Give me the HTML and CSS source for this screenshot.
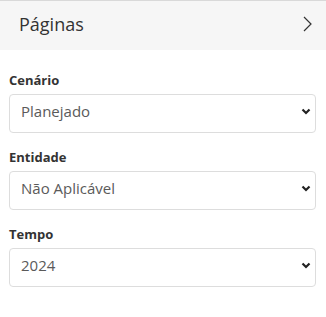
FILE: index.html
```html
<!DOCTYPE html>
<html lang="pt-BR">
<head>
    <meta charset="UTF-8">
    <meta name="viewport" content="width=device-width, initial-scale=1.0">
    <title>Filtros</title>
    <link rel="stylesheet" href="styles.css">
</head>
<body>
    <div class="panel-header">
        <span class="panel-title">Páginas</span>
        <svg class="panel-arrow" width="9" height="16" viewBox="0 0 9 16">
            <polyline points="1,1 8,8 1,15" fill="none" stroke="#333" stroke-width="1.2"/>
        </svg>
    </div>

    <div class="filters">
        <div class="form-group">
            <label for="cenario">Cenário</label>
            <div class="select-wrap">
                <select id="cenario">
                    <option>Planejado</option>
                    <option>Realizado</option>
                </select>
                <svg class="select-arrow" width="10" height="7" viewBox="0 0 10 7">
                    <polyline points="1.5,1.5 5,5 8.5,1.5" fill="none" stroke="#222" stroke-width="2.2"/>
                </svg>
            </div>
        </div>

        <div class="form-group">
            <label for="entidade">Entidade</label>
            <div class="select-wrap">
                <select id="entidade">
                    <option>Não Aplicável</option>
                </select>
                <svg class="select-arrow" width="10" height="7" viewBox="0 0 10 7">
                    <polyline points="1.5,1.5 5,5 8.5,1.5" fill="none" stroke="#222" stroke-width="2.2"/>
                </svg>
            </div>
        </div>

        <div class="form-group">
            <label for="tempo">Tempo</label>
            <div class="select-wrap">
                <select id="tempo">
                    <option>2024</option>
                    <option>2023</option>
                </select>
                <svg class="select-arrow" width="10" height="7" viewBox="0 0 10 7">
                    <polyline points="1.5,1.5 5,5 8.5,1.5" fill="none" stroke="#222" stroke-width="2.2"/>
                </svg>
            </div>
        </div>
    </div>
</body>
</html>
```

FILE: styles.css
```css
* {
    margin: 0;
    padding: 0;
    box-sizing: border-box;
}

body {
    font-family: 'Open Sans', sans-serif;
    background: #fff;
    color: #333;
}

.panel-header {
    display: flex;
    align-items: center;
    justify-content: space-between;
    height: 50px;
    padding: 0 14px 0 19px;
    background: #f6f6f6;
    border-top: 1px solid #d9d9d9;
}

.panel-title {
    font-size: 18px;
    color: #333;
    line-height: 1;
    margin-top: -3px;
}

.panel-arrow {
    display: block;
    margin-top: -3px;
}

.filters {
    padding: 20px 10px 0 9px;
}

.form-group {
    margin-bottom: 14px;
}

label {
    display: block;
    font-size: 13px;
    font-weight: 700;
    line-height: 20px;
    margin-bottom: 4px;
    color: #333;
}

.select-wrap {
    position: relative;
}

select {
    appearance: none;
    -webkit-appearance: none;
    width: 100%;
    height: 39px;
    padding: 0 30px 5px 11px;
    border: 1px solid #ddd;
    border-radius: 4px;
    background: #fff;
    font-family: 'Open Sans', sans-serif;
    font-size: 15px;
    color: #5a5a5a;
}

.select-arrow {
    position: absolute;
    right: 5px;
    top: 14px;
    pointer-events: none;
}
```
